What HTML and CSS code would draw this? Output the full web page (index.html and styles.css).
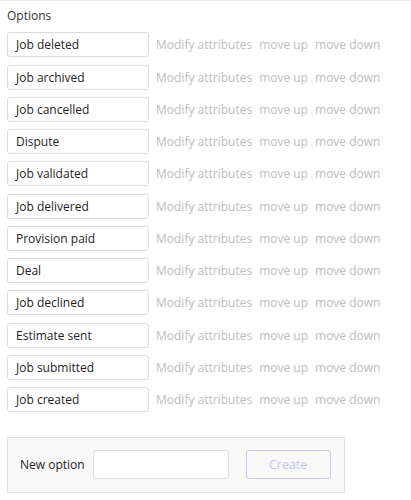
FILE: index.html
```html
<!DOCTYPE html>
<html>
<head>
<meta charset="utf-8">
<link rel="stylesheet" href="styles.css">
</head>
<body>
<div class="page">
  <div class="title">Options</div>
  <div class="list">
    <div class="row"><div class="opt">Job deleted</div><span class="lnk">Modify attributes</span><span class="lnk">move up</span><span class="lnk">move down</span></div>
    <div class="row"><div class="opt">Job archived</div><span class="lnk">Modify attributes</span><span class="lnk">move up</span><span class="lnk">move down</span></div>
    <div class="row"><div class="opt">Job cancelled</div><span class="lnk">Modify attributes</span><span class="lnk">move up</span><span class="lnk">move down</span></div>
    <div class="row"><div class="opt">Dispute</div><span class="lnk">Modify attributes</span><span class="lnk">move up</span><span class="lnk">move down</span></div>
    <div class="row"><div class="opt">Job validated</div><span class="lnk">Modify attributes</span><span class="lnk">move up</span><span class="lnk">move down</span></div>
    <div class="row"><div class="opt">Job delivered</div><span class="lnk">Modify attributes</span><span class="lnk">move up</span><span class="lnk">move down</span></div>
    <div class="row"><div class="opt">Provision paid</div><span class="lnk">Modify attributes</span><span class="lnk">move up</span><span class="lnk">move down</span></div>
    <div class="row"><div class="opt">Deal</div><span class="lnk">Modify attributes</span><span class="lnk">move up</span><span class="lnk">move down</span></div>
    <div class="row"><div class="opt">Job declined</div><span class="lnk">Modify attributes</span><span class="lnk">move up</span><span class="lnk">move down</span></div>
    <div class="row"><div class="opt">Estimate sent</div><span class="lnk">Modify attributes</span><span class="lnk">move up</span><span class="lnk">move down</span></div>
    <div class="row"><div class="opt">Job submitted</div><span class="lnk">Modify attributes</span><span class="lnk">move up</span><span class="lnk">move down</span></div>
    <div class="row"><div class="opt">Job created</div><span class="lnk">Modify attributes</span><span class="lnk">move up</span><span class="lnk">move down</span></div>
  </div>
  <div class="panel">
    <span class="plabel">New option</span>
    <div class="pinput"></div>
    <div class="btn">Create</div>
  </div>
</div>
</body>
</html>
```
FILE: styles.css
```css
html, body {
  margin: 0;
  padding: 0;
  background: #fff;
}
body {
  font-family: "Open Sans", "Liberation Sans", sans-serif;
  font-size: 12px;
  color: #333;
  border-top: 1px solid #ececec;
}
.page {
  padding: 0 7px;
}
.title {
  height: 18px;
  line-height: 18px;
  margin-top: 6px;
  color: #333;
}
.list {
  display: flex;
  flex-direction: column;
  gap: 7.27px;
  margin-top: 7.3px;
}
.row {
  display: flex;
  align-items: center;
  height: 25px;
}
.opt {
  box-sizing: border-box;
  width: 142px;
  height: 25px;
  line-height: 23px;
  border: 1px solid #dcdcdc;
  border-radius: 3px;
  padding-left: 8px;
  color: #1e1e1e;
  margin-right: 7px;
}
.lnk {
  color: #bdbdbd;
  margin-right: 7px;
}
.panel {
  box-sizing: border-box;
  width: 338px;
  height: 56px;
  margin-top: 24.7px;
  background: #f8f8f8;
  border: 1px solid #e0e0e0;
  display: flex;
  align-items: center;
  padding-left: 12px;
}
.plabel {
  color: #1e1e1e;
  margin-right: 8px;
}
.pinput {
  box-sizing: border-box;
  width: 136px;
  height: 29px;
  background: #fff;
  border: 1px solid #dcdcdc;
  border-radius: 3px;
  margin-right: 17px;
}
.btn {
  box-sizing: border-box;
  width: 85px;
  height: 29px;
  border: 1px solid #c9c9f5;
  border-radius: 3px;
  color: #c4c4f4;
  text-align: center;
  line-height: 27px;
  font-size: 12.5px;
}
```
